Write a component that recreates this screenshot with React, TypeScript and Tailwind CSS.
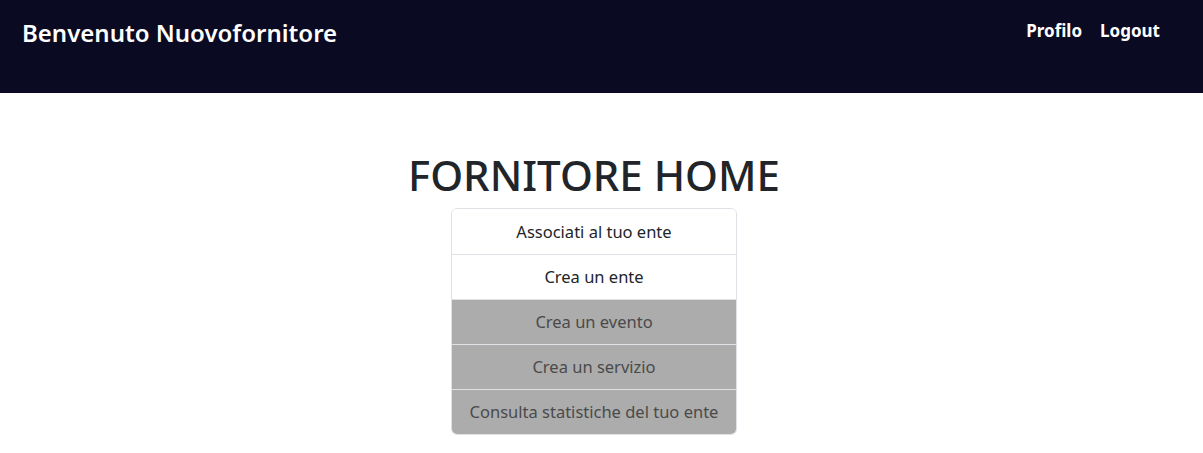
const items = [
  { label: "Associati al tuo ente", active: true },
  { label: "Crea un ente", active: true },
  { label: "Crea un evento", active: false },
  { label: "Crea un servizio", active: false },
  { label: "Consulta statistiche del tuo ente", active: false },
];

export default function App() {
  return (
    <div className="min-h-screen bg-white font-['Noto_Sans',sans-serif] text-[#212529]">
      {/* Navbar */}
      <nav className="h-[93px] bg-[#0a0a23] flex items-start justify-between pl-[22px] pr-[43px]">
        <h1 className="mt-[16px] text-[24px] font-semibold text-white leading-[34px]">
          Benvenuto Nuovofornitore
        </h1>
        <div className="mt-[19px] flex gap-[18px] text-[17px] font-bold text-white leading-[24px]">
          <a href="#">Profilo</a>
          <a href="#">Logout</a>
        </div>
      </nav>

      <main className="flex flex-col items-center pr-[15px]">
        <h2 className="mt-[57px] mb-[8px] text-[42px] font-medium leading-[1.2]">
          FORNITORE HOME
        </h2>
        <ul className="w-[286px] border border-[#dee2e6] rounded-[6px] overflow-hidden">
          {items.map((item, i) => (
            <li
              key={item.label}
              className={
                (i > 0 ? "border-t border-[#dee2e6] " : "") +
                (item.active
                  ? "bg-white text-[#212529]"
                  : "bg-[#acacac] text-[#4a4a4a]") +
                " h-[45px] flex items-center justify-center text-[16.5px]"
              }
            >
              {item.label}
            </li>
          ))}
        </ul>
      </main>
    </div>
  );
}
